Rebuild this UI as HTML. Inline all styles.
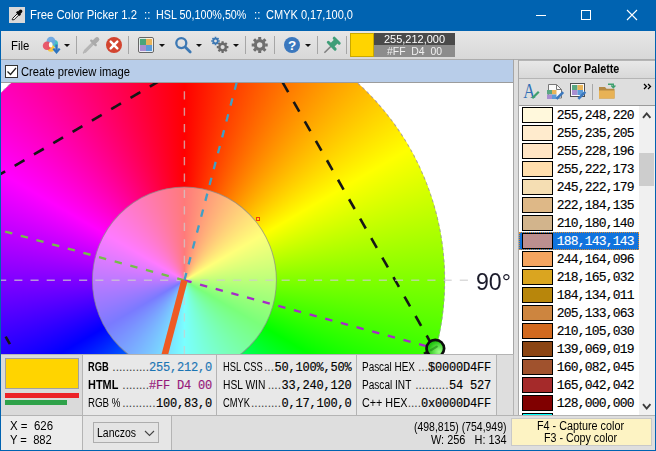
<!DOCTYPE html>
<html><head><meta charset="utf-8">
<style>
*{box-sizing:border-box;margin:0;padding:0}
html,body{width:656px;height:451px;overflow:hidden;background:#dedede;font-family:"Liberation Sans",sans-serif;font-size:12px;color:#000}
.abs{position:absolute}
i{font-style:normal;display:block}
#win{position:absolute;left:0;top:0;width:656px;height:451px;background:#dedede;overflow:hidden}
#frame{left:0;top:0;width:656px;height:451px;border:1px solid #0063b1;border-top:none;pointer-events:none}
#title{left:0;top:0;width:656px;height:31px;background:#0063b1}
#tb{left:1px;top:31px;width:654px;height:29px;background:linear-gradient(#e6e6e6,#d8d8d8);border-bottom:1px solid #adadad}
.sep{position:absolute;top:36px;width:1px;height:18px;background:#a6a6a6}
.dd{position:absolute;top:44px;width:0;height:0;border-left:3px solid transparent;border-right:3px solid transparent;border-top:3px solid #111}
#chk{left:1px;top:60px;width:513px;height:22px;background:#b8cde9}
#cb{left:5px;top:65px;width:13px;height:13px;background:#fff;border:1px solid #333}
#img{left:1px;top:83px;width:512px;height:271px;background:#fff;overflow:hidden}
#pal{left:518px;top:60px;width:137px;height:355px;background:#dedede;border-left:1px solid #a9a9a9}
#palh{left:0;top:0;width:136px;height:19px;background:linear-gradient(#e8e8e8,#d8d8d8);border-top:1px solid #b5b5b5;border-bottom:1px solid #b5b5b5}
#list{left:0px;top:45px;width:136px;height:310px;background:#fff;overflow:hidden;border-top:1px solid #9a9a9a}
#sb{left:120px;top:0;width:17px;height:310px;background:#f0f0f0}
#thumb{left:0px;top:47px;width:15px;height:33px;background:#cdcdcd}
.mono{font-family:"Liberation Mono",monospace;font-size:13px;letter-spacing:-0.8px;white-space:pre;-webkit-text-stroke:0.15px currentColor}
.row{position:absolute;left:0;height:18px;width:120px}
.sw{position:absolute;left:3px;top:1px;width:31px;height:16px;border:1px solid #000}
.row .mono{position:absolute;left:37.8px;top:2px;line-height:16px}
.row.sel{background:#1173dd;color:#fff;outline:1px dotted #e08a2c;outline-offset:-1px}
.vl{position:absolute;width:1px;background:#b4b4b4}
.hl{position:absolute;height:1px;background:#b4b4b4}
.lab{position:absolute;white-space:pre;font-size:12px;line-height:14px;transform-origin:0 0;color:#000}
.val{position:absolute;text-align:right;line-height:14px}
.val.mono{font-size:12px;letter-spacing:-0.2px;margin-left:-1px;margin-top:1px}
.dots{position:absolute;text-align:right;white-space:nowrap;font-size:12px;line-height:14px;color:#444}
#hint{left:511px;top:418px;width:141px;height:28px;background:#fdf3c3;border:1px solid #c9c9c9}
</style></head><body>
<div id="win">
<div id="title" class="abs">
 <div class="abs" style="left:9px;top:7px;width:16px;height:16px;background:#d9d9d9"></div>
 <svg class="abs" style="left:9px;top:7px" width="16" height="16" viewBox="0 0 16 16"><path d="M3.200 12.800 L3.700 11.300 L8.600 6.400 L10 7.800 L5.100 12.700 Z" fill="#fafafa" stroke="#1a1a1a" stroke-width="1"/><path d="M7.700 4.700 L11.300 8.300" stroke="#0a0a0a" stroke-width="2"/><path d="M9.700 6.300 L11.700 4.300" stroke="#0a0a0a" stroke-width="3.400" stroke-linecap="round"/></svg>
 <svg class="abs" style="left:530px;top:5px" width="120" height="22" viewBox="530 5 120 22" fill="none" stroke="#fff" stroke-width="1"><path d="M536 15.500H546"/><rect x="581.500" y="10.500" width="9" height="9"/><path d="M627 10L637 20M637 10L627 20" stroke-width="1.100"/></svg>
</div>
<span class="lab" style="left:30px;top:8.33px;transform:scaleX(0.9438);color:#fff">Free Color Picker 1.2</span><span class="lab" style="left:143.5px;top:8.33px;transform:scaleX(0.9598);color:#fff">::</span><span class="lab" style="left:155.8px;top:8.33px;transform:scaleX(0.8954);color:#fff">HSL 50,100%,50%</span><span class="lab" style="left:253.7px;top:8.33px;transform:scaleX(0.9598);color:#fff">::</span><span class="lab" style="left:265.5px;top:8.33px;transform:scaleX(0.9185);color:#fff">CMYK 0,17,100,0</span>
<div id="tb" class="abs"></div>
<span class="lab" style="left:10.6px;top:38.53px;transform:scaleX(0.9464);">File</span>
 <!-- blob icon -->
 <svg class="abs" style="left:42px;top:36px" width="20" height="20" viewBox="0 0 20 20"><circle cx="12.400" cy="7.600" r="3.600" fill="#45c2c6"/><circle cx="9" cy="12.200" r="3.500" fill="#f7c640"/><circle cx="9" cy="5.200" r="4.400" fill="#6aa6e2" fill-opacity=".92"/><circle cx="5.100" cy="9.800" r="4.300" fill="#e84d62" fill-opacity=".92"/><ellipse cx="8.700" cy="8.700" rx="1.900" ry="2.700" fill="#fffbe8"/><path d="M14.500 8.500v7.200" stroke="#2e75c0" stroke-width="2.400" fill="none"/><path d="M11.300 12.600l3.200 3.700 3.200-3.700" stroke="#2e75c0" stroke-width="2.200" fill="none"/></svg>
 <i class="dd" style="left:64px"></i>
 <i class="sep" style="left:76px"></i>
 <!-- grey eyedropper -->
 <svg class="abs" style="left:82px;top:36px" width="20" height="20" viewBox="0 0 20 20"><path d="M1.600 16.800L3.400 14.600" stroke="#b4b4b4" stroke-width="1.600" stroke-linecap="round"/><path d="M3.200 15.200L11.500 6.900" stroke="#b6b6b6" stroke-width="3.200" stroke-linecap="round"/><path d="M9.300 4.700L13.700 9.100" stroke="#a9a9a9" stroke-width="2.400" stroke-linecap="round"/><path d="M12.200 6.200L15 3.400" stroke="#ababab" stroke-width="4.600" stroke-linecap="round"/></svg>
 <!-- red x -->
 <svg class="abs" style="left:103px;top:34px" width="22" height="22" viewBox="0 0 22 22"><circle cx="11" cy="11" r="8" fill="#d3442f"/><path d="M7.700 7.700l6.600 6.600M14.300 7.700l-6.600 6.600" stroke="#fff" stroke-width="2.500" stroke-linecap="round"/></svg>
 <i class="sep" style="left:128px"></i>
 <!-- palette icon -->
 <svg class="abs" style="left:137px;top:35px" width="20" height="20" viewBox="0 0 20 20"><rect x="1.500" y="2.500" width="15" height="15" rx="1.500" fill="#fff" stroke="#666"/><rect x="2.800" y="3.800" width="6.200" height="6.200" fill="#4aa47a"/><rect x="9" y="3.800" width="6.200" height="6.200" fill="#e8b45a"/><rect x="2.800" y="10" width="6.200" height="6.200" fill="#a88fd0"/><rect x="9" y="10" width="6.200" height="6.200" fill="#5b9bd8"/></svg>
 <i class="dd" style="left:159px"></i>
 <!-- magnifier -->
 <svg class="abs" style="left:172px;top:34px" width="22" height="22" viewBox="0 0 22 22" fill="none" stroke="#3c78b4"><circle cx="9.300" cy="9.100" r="5" stroke-width="2.300"/><path d="M13.200 13l5 5" stroke-width="2.800" stroke-linecap="round"/></svg>
 <i class="dd" style="left:196px"></i>
 <!-- gears -->
 <svg class="abs" style="left:209px;top:34px" width="22" height="22" viewBox="0 0 22 22"><g transform="translate(6.500,7)"><circle r="2.300" fill="none" stroke="#3c78b4" stroke-width="1.800"/><g stroke="#3c78b4" stroke-width="1.700"><path d="M0-4.300V-2.800M0 4.300V2.800M-4.300 0H-2.800M4.300 0H2.800M-3-3L-2-2M3 3L2 2M-3 3L-2 2M3-3L2-2"/></g></g><g transform="translate(13.600,13.100)"><circle r="3.300" fill="none" stroke="#6a6a6a" stroke-width="2.400"/><g stroke="#6a6a6a" stroke-width="2.200"><path d="M0-5.800V-4M0 5.800V4M-5.800 0H-4M5.800 0H4M-4.100-4.100L-2.800-2.800M4.100 4.100L2.800 2.800M-4.100 4.100L-2.800 2.800M4.100-4.100L2.800-2.800"/></g></g></svg>
 <i class="dd" style="left:233px"></i>
 <i class="sep" style="left:245px"></i>
 <!-- gear grey -->
 <svg class="abs" style="left:249px;top:34px" width="22" height="22" viewBox="0 0 22 22"><g transform="translate(10.700,11)"><circle r="4.300" fill="none" stroke="#6e6e6e" stroke-width="3.200"/><g stroke="#6e6e6e" stroke-width="3"><path d="M0-8V-5.500M0 8V5.500M-8 0H-5.500M8 0H5.500M-5.700-5.700L-3.900-3.900M5.700 5.700L3.900 3.900M-5.700 5.700L-3.900 3.900M5.700-5.700L3.900-3.900"/></g></g></svg>
 <i class="sep" style="left:274px"></i>
 <!-- help -->
 <svg class="abs" style="left:281px;top:34px" width="22" height="22" viewBox="0 0 22 22"><circle cx="11" cy="11" r="8" fill="#3b78be"/><text x="11" y="15.800" text-anchor="middle" font-family="Liberation Sans,sans-serif" font-weight="bold" font-size="13.500" fill="#fff">?</text></svg>
 <i class="dd" style="left:305px"></i>
 <i class="sep" style="left:317px"></i>
 <!-- pin -->
 <svg class="abs" style="left:322px;top:35px" width="22" height="22" viewBox="0 0 22 22"><path d="M2.400 17.800L9 11.300" stroke="#808080" stroke-width="1.600"/><path d="M6.300 7.300L13.100 14.100" stroke="#3f9e78" stroke-width="3" stroke-linecap="round"/><path d="M9.700 10.700L14.700 5.700" stroke="#3f9e78" stroke-width="5.200"/><path d="M12.200 3.200L17.200 8.200" stroke="#3f9e78" stroke-width="3" stroke-linecap="round"/></svg>
 <i class="sep" style="left:346px"></i>
 <div class="abs" style="left:350px;top:33px;width:24px;height:24px;background:#ffd400;border:1px solid #c9a800"></div>
 <div class="abs" style="left:374px;top:33px;width:81px;height:12px;background:#4a4a4a"></div>
 <div class="abs" style="left:374px;top:45px;width:81px;height:12px;background:#8c8c8c"></div>
<span class="lab" style="left:383.5px;top:32.40px;transform:scaleX(0.9538);color:#fff;font-size:11.5px">255,212,000</span>
<span class="lab" style="left:387px;top:44.00px;transform:scaleX(0.9058);color:#f0f0f0;font-size:11.5px">#FF  D4  00</span>
<div id="chk" class="abs"></div>
<i class="hl" style="left:1px;top:82px;width:513px;background:#9c9c9c"></i>
<i class="vl" style="left:513px;top:59px;height:296px;background:#a6a6a6"></i>
<div id="cb" class="abs"><svg width="11" height="11" viewBox="0 0 11 11" style="display:block"><path d="M1.500 5.500l3 3 5.500-6.500" fill="none" stroke="#222" stroke-width="1.300"/></svg></div>
<span class="lab" style="left:21.3px;top:64.53px;transform:scaleX(0.9339);">Create preview image</span>
<div id="img" class="abs">
<div class="abs" style="left:-76.9px;top:-63px;width:520.6px;height:520.6px;border-radius:50%;background:conic-gradient(from 0deg,#f00,#ff0,#0f0,#0ff,#00f,#f0f,#f00);transform:scaleY(1.015);filter:blur(0.7px)"></div>
<svg class="abs" style="left:0;top:0" width="513" height="271" viewBox="1 83 513 271">
<defs><filter id="bl" x="-5%" y="-5%" width="110%" height="110%"><feGaussianBlur stdDeviation="0.75"/></filter>
<radialGradient id="gl" cx="0.72" cy="0.68" r="0.62"><stop offset="0" stop-color="#9cff86"/><stop offset="1" stop-color="#24c410"/></radialGradient></defs>
<g filter="url(#bl)"><g transform="translate(0,280.3) scale(1,1.015) translate(0,-280.3)">

<circle cx="184.400" cy="280.300" r="260.300" fill="none" stroke="#9a8fb0" stroke-width="1" stroke-dasharray="3 3" stroke-opacity=".8"/>
<circle cx="184.400" cy="280.300" r="92" fill="#fff" fill-opacity="0.48" stroke="#8a8a8a" stroke-opacity=".7" stroke-width="1"/>
<line x1="-65.0" y1="213.5" x2="251.2" y2="30.9" stroke-dashoffset="-2.8" stroke="#161616" stroke-width="2.6" stroke-dasharray="11.3 11" stroke-linecap="butt"/>
<line x1="251.2" y1="30.9" x2="433.8" y2="347.1" stroke="#161616" stroke-width="2.6" stroke-dasharray="11.15 11" stroke-linecap="butt" stroke-dashoffset="3.6"/>
<line x1="-65.0" y1="213.5" x2="117.6" y2="529.7" stroke="#161616" stroke-width="2.6" stroke-dasharray="8.6 13.7" stroke-linecap="butt" stroke-dashoffset="-7.4"/>
<line x1="433.8" y1="347.1" x2="117.6" y2="529.7" stroke="#161616" stroke-width="2.6" stroke-dasharray="11.3 11" stroke-linecap="butt"/>
<line x1="184.4" y1="280.3" x2="184.4" y2="0.0" stroke="#cdcdcd" stroke-width="1.4" stroke-dasharray="8.1 8.1" stroke-opacity="0.72"/>
<line x1="184.4" y1="280.3" x2="184.4" y2="400.0" stroke="#cdcdcd" stroke-width="1.4" stroke-dasharray="8.1 8.1" stroke-opacity="0.72"/>
<line x1="184.4" y1="280.3" x2="-20.0" y2="280.3" stroke="#cdcdcd" stroke-width="1.4" stroke-dasharray="8.1 8.1" stroke-opacity="0.72"/>
<line x1="184.4" y1="280.3" x2="472.0" y2="280.3" stroke="#cdcdcd" stroke-width="1.4" stroke-dasharray="8.1 8.1" stroke-opacity="0.72"/>
<line x1="184.4" y1="280.3" x2="251.8" y2="28.9" stroke="#3f9fc6" stroke-width="2.3" stroke-dasharray="7.4 8.8"/>
<line x1="184.4" y1="280.3" x2="-67.0" y2="212.9" stroke="#74bd48" stroke-width="2.3" stroke-dasharray="7.4 8.8"/>
<line x1="184.4" y1="280.3" x2="435.8" y2="347.7" stroke="#a62cc8" stroke-width="2.3" stroke-dasharray="7.4 8.8"/>
<line x1="184.4" y1="280.3" x2="117.0" y2="531.7" stroke="#ee5a24" stroke-width="6.5"/>
</g>
<rect x="256.500" y="217.500" width="3" height="3" fill="none" stroke="#f4400c" stroke-width="1"/>
<circle cx="435.300" cy="348.600" r="8.800" fill="url(#gl)" stroke="#0a0a0a" stroke-width="2.700"/><path d="M430.800 350.200L436.800 346.600" stroke="#1d7d12" stroke-opacity=".55" stroke-width="2.200" stroke-linecap="round"/>
<text x="476" y="290" font-family="Liberation Sans,sans-serif" font-size="24" fill="#1b1b2b" textLength="35" lengthAdjust="spacingAndGlyphs">90°</text>
</g>
</svg>
</div>
<div id="pal" class="abs">
 <div id="palh" class="abs"></div>
 <svg class="abs" style="left:4px;top:22px" width="132" height="20" viewBox="523 82 132 20">
  <text x="523.300" y="98.300" font-family="Liberation Serif,serif" font-size="20" fill="#2f6fb5" textLength="12" lengthAdjust="spacingAndGlyphs">A</text><path d="M532.300 98.300l6.500-6.500" stroke="#3fa06f" stroke-width="2.200"/>
  <path d="M548.500 84.500h8l5 5v8.500h-13z" fill="#fafafa" stroke="#777"/><path d="M556.500 84.500v5h5" fill="none" stroke="#777"/><rect x="547" y="90" width="5" height="4.500" fill="#5aa782"/><rect x="552" y="90" width="4.500" height="4.500" fill="#e8b45a"/><rect x="547" y="94.500" width="5" height="4.500" fill="#a88fd0"/><rect x="552" y="94.500" width="4.500" height="4.500" fill="#5b9bd8"/><path d="M556.500 98.800l6.700-6.700" stroke="#3b78be" stroke-width="2.600"/>
  <rect x="570.500" y="83.500" width="14" height="13" fill="#fafafa" stroke="#505050"/><rect x="572" y="85" width="5.500" height="5" fill="#5aa782"/><rect x="577.500" y="85" width="5.500" height="5" fill="#e8b45a"/><rect x="572" y="90" width="5.500" height="5" fill="#a88fd0"/><rect x="577.500" y="90" width="5.500" height="5" fill="#5b9bd8"/><path d="M578.300 98.800l7-7" stroke="#3b78be" stroke-width="2.600"/>
  <path d="M592.500 84v16" stroke="#a8a8a8"/>
  <path d="M599 87h6l1.500 1.800h8v9.700h-15.500z" fill="#b58a45"/><path d="M599 90.500h15.500v8h-15.500z" fill="#e8b255"/><path d="M608 84.300h5.300v2.500M611.200 85.600l2.100 2.100 2.100-2.100" fill="none" stroke="#3fa06f" stroke-width="1.400"/>
  <path d="M644 84l2.500 2.500-2.500 2.500M648 84l2.500 2.500-2.500 2.500" fill="none" stroke="#000" stroke-width="1.300"/>
 </svg>
 <div id="list" class="abs">
<div class="row" style="top:0px"><i class="sw" style="background:#fff8dc"></i><span class="mono">255,248,220</span></div>
<div class="row" style="top:18px"><i class="sw" style="background:#ffebcd"></i><span class="mono">255,235,205</span></div>
<div class="row" style="top:36px"><i class="sw" style="background:#ffe4c4"></i><span class="mono">255,228,196</span></div>
<div class="row" style="top:54px"><i class="sw" style="background:#ffdead"></i><span class="mono">255,222,173</span></div>
<div class="row" style="top:72px"><i class="sw" style="background:#f5deb3"></i><span class="mono">245,222,179</span></div>
<div class="row" style="top:90px"><i class="sw" style="background:#deb887"></i><span class="mono">222,184,135</span></div>
<div class="row" style="top:108px"><i class="sw" style="background:#d2b48c"></i><span class="mono">210,180,140</span></div>
<div class="row sel" style="top:126px"><i class="sw" style="background:#bc8f8f"></i><span class="mono">188,143,143</span></div>
<div class="row" style="top:144px"><i class="sw" style="background:#f4a460"></i><span class="mono">244,164,096</span></div>
<div class="row" style="top:162px"><i class="sw" style="background:#daa520"></i><span class="mono">218,165,032</span></div>
<div class="row" style="top:180px"><i class="sw" style="background:#b8860b"></i><span class="mono">184,134,011</span></div>
<div class="row" style="top:198px"><i class="sw" style="background:#cd853f"></i><span class="mono">205,133,063</span></div>
<div class="row" style="top:216px"><i class="sw" style="background:#d2691e"></i><span class="mono">210,105,030</span></div>
<div class="row" style="top:234px"><i class="sw" style="background:#8b4513"></i><span class="mono">139,069,019</span></div>
<div class="row" style="top:252px"><i class="sw" style="background:#a0522d"></i><span class="mono">160,082,045</span></div>
<div class="row" style="top:270px"><i class="sw" style="background:#a52a2a"></i><span class="mono">165,042,042</span></div>
<div class="row" style="top:288px"><i class="sw" style="background:#800000"></i><span class="mono">128,000,000</span></div>
<div class="row" style="top:306px"><i class="sw" style="background:#00ffff"></i><span class="mono"></span></div>
  <div id="sb" class="abs">
   <svg class="abs" style="left:0;top:0" width="17" height="17" viewBox="0 0 17 17"><path d="M4 11.800l3.700-4.300 3.700 4.300" fill="none" stroke="#3c3c3c" stroke-width="1.900"/></svg>
   <div id="thumb" class="abs"></div>
   <svg class="abs" style="left:0;top:292px" width="17" height="17" viewBox="0 0 17 17"><path d="M4 6.200l3.700 4.300 3.700-4.300" fill="none" stroke="#3c3c3c" stroke-width="1.900"/></svg>
  </div>
 </div>
</div>
<span class="lab" style="left:553.3px;top:62.33px;transform:scaleX(0.8958);font-weight:bold">Color Palette</span>
<!-- info panels -->
<div class="abs" style="left:1px;top:354px;width:81px;height:61px;background:#dadada"></div>
<div class="abs" style="left:83px;top:355px;width:413px;height:60px;background:#e8e8e8"></div>
<div class="abs" style="left:5px;top:358px;width:74px;height:31px;background:#ffd400;border:1px solid #a0a0a0"></div>
<div class="abs" style="left:5px;top:393px;width:74px;height:5px;background:#ec2227"></div>
<div class="abs" style="left:5px;top:400px;width:62px;height:5px;background:#2fa24a"></div>
<i class="hl" style="left:1px;top:354px;width:513px"></i>
<i class="vl" style="left:82px;top:354px;height:96px"></i>
<i class="vl" style="left:216px;top:354px;height:61px"></i>
<i class="vl" style="left:356px;top:354px;height:61px"></i>
<i class="vl" style="left:496px;top:354px;height:61px"></i>
<i class="vl" style="left:513px;top:354px;height:61px"></i>
<i class="hl" style="left:1px;top:415px;width:654px"></i>

<span class="lab" style="left:88.1px;top:360.33px;transform:scaleX(0.7763);font-weight:bold">RGB</span><div class="dots" style="left:100px;top:360.3px;width:49px">...........</div><div class="val mono" style="left:122px;top:360.3px;width:91px;color:#1b75b4">255,212,0</div>
<span class="lab" style="left:88.1px;top:378.33px;transform:scaleX(0.9093);font-weight:bold">HTML</span><div class="dots" style="left:100px;top:378.3px;width:49px">........</div><div class="val mono" style="left:122px;top:378.3px;width:91px;color:#96187a">#FF D4 00</div>
<span class="lab" style="left:88.1px;top:396.33px;transform:scaleX(0.8098);">RGB %</span><div class="dots" style="left:100px;top:396.3px;width:55.500px">..........</div><div class="val mono" style="left:122px;top:396.3px;width:91px">100,83,0</div>

<span class="lab" style="left:222.5px;top:360.33px;transform:scaleX(0.7789);">HSL CSS</span><div class="dots" style="left:240px;top:360.3px;width:34px">...</div><div class="val mono" style="left:262px;top:360.3px;width:90.500px">50,100%,50%</div>
<span class="lab" style="left:222.5px;top:378.33px;transform:scaleX(0.8539);">HSL WIN</span><div class="dots" style="left:240px;top:378.3px;width:41px">....</div><div class="val mono" style="left:262px;top:378.3px;width:90.500px">33,240,120</div>
<span class="lab" style="left:222.5px;top:396.33px;transform:scaleX(0.7788);">CMYK</span><div class="dots" style="left:240px;top:396.3px;width:41px">.........</div><div class="val mono" style="left:262px;top:396.3px;width:90.500px">0,17,100,0</div>

<span class="lab" style="left:362.4px;top:360.33px;transform:scaleX(0.8278);">Pascal HEX</span><div class="dots" style="left:380px;top:360.3px;width:48px">...</div><div class="val mono" style="left:402px;top:360.3px;width:90px">$0000D4FF</div>
<span class="lab" style="left:362.4px;top:378.33px;transform:scaleX(0.8401);">Pascal INT</span><div class="dots" style="left:380px;top:378.3px;width:68.500px">..........</div><div class="val mono" style="left:402px;top:378.3px;width:90px">54 527</div>
<span class="lab" style="left:362.4px;top:396.33px;transform:scaleX(0.8976);">C++ HEX</span><div class="dots" style="left:380px;top:396.3px;width:41px">....</div><div class="val mono" style="left:402px;top:396.3px;width:90px">0x0000D4FF</div>

<!-- status -->
<div class="abs" style="left:1px;top:416px;width:81px;height:34px;background:#ececec"></div>
<div class="abs" style="left:83px;top:416px;width:88px;height:34px;background:#e6e6e6"></div>
<i class="vl" style="left:171px;top:415px;height:35px"></i>
<span class="lab" style="left:10.4px;top:418.83px;transform:scaleX(0.9548);">X =  626</span>
<span class="lab" style="left:10.4px;top:432.53px;transform:scaleX(0.9326);">Y =  882</span>
<div class="abs" style="left:93px;top:422px;width:66px;height:21px;background:#e4e4e4;border:1px solid #adadad"></div>
<span class="lab" style="left:97.4px;top:425.63px;transform:scaleX(0.8726);">Lanczos</span>
<svg class="abs" style="left:144px;top:430px" width="11" height="7" viewBox="0 0 11 7"><path d="M1 1l4.500 4.500 4.500-4.500" fill="none" stroke="#444" stroke-width="1.100"/></svg>
<span class="lab" style="left:413.7px;top:420.03px;transform:scaleX(0.8720);">(498,815) (754,949)</span>
<span class="lab" style="left:430.5px;top:432.73px;transform:scaleX(0.9103);">W: 256   H: 134</span>
<div id="hint" class="abs"></div>
<span class="lab" style="left:537px;top:418.83px;transform:scaleX(0.8997);">F4 - Capture color</span>
<span class="lab" style="left:544px;top:431.43px;transform:scaleX(0.8900);">F3 - Copy color</span>
<div id="frame" class="abs"></div>
</div>
</body></html>
